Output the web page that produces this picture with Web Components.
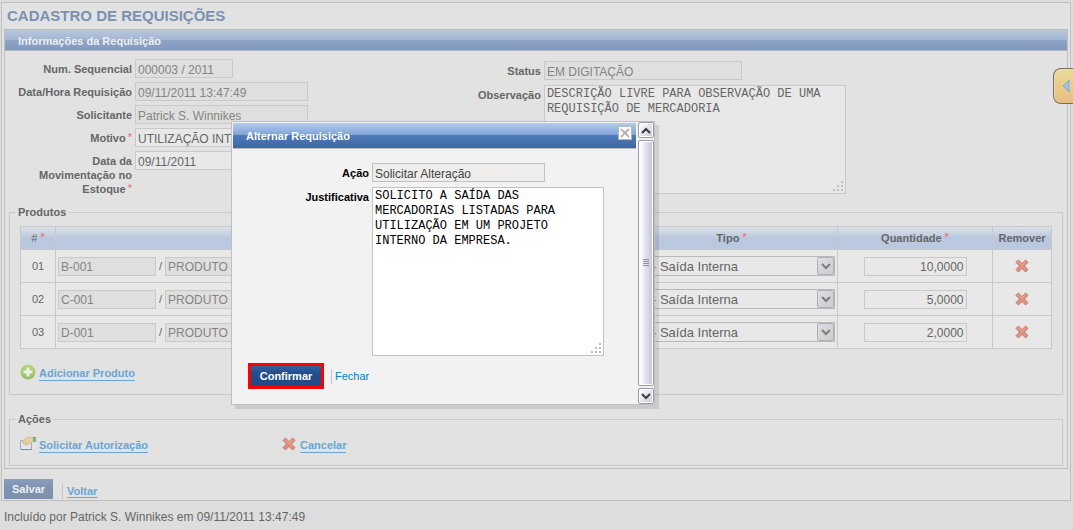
<!DOCTYPE html>
<html lang="pt-BR">
<head>
<meta charset="utf-8">
<title>Cadastro de Requisições</title>
<style>
  html { background: #dddddd; }
  body {
    margin: 0; padding-top: 2px;
    font: 11px/14px "Liberation Sans", Arial, sans-serif;
    color: #666666;
  }
  main { display: block; }
  .columns { display: grid; grid-template-columns: 5fr 8fr; padding-top: 8px; }
  .stack { display: flex; flex-direction: column; gap: 4px; }
  .second { --label-width: 129px; padding-top: 2px; gap: 5px; }
  .actions { display: grid; grid-template-columns: repeat(4, 1fr); gap: 8px; padding: 10px 0 13px 4px; }
  .add { display: flex; padding: 15px 0 14px 4px; }
  .note { margin: 0; padding: 7px 4px; font-size: 12px; line-height: 18px; }
  .dialog-form { padding-top: 14px; gap: 5px; }
</style>
</head>
<body>
<main>
  <app-panel>
    <span slot="title">CADASTRO DE REQUISIÇÕES</span>
    <section-box heading="Informações da Requisição">
      <div class="columns">
        <div class="stack">
          <form-field label="Num. Sequencial" value="000003 / 2011" size="98" locked></form-field>
          <form-field label="Data/Hora Requisição" value="09/11/2011 13:47:49" size="173" locked></form-field>
          <form-field label="Solicitante" value="Patrick S. Winnikes" size="173" locked></form-field>
          <form-field label="Motivo" value="UTILIZAÇÃO INTERNA" size="173" required></form-field>
          <form-field label="Data da|Movimentação no|Estoque" value="09/11/2011" size="98" required></form-field>
        </div>
        <div class="stack second">
          <form-field label="Status" value="EM DIGITAÇÃO" size="198" locked></form-field>
          <form-field label="Observação" value="DESCRIÇÃO LIVRE PARA OBSERVAÇÃO DE UMA REQUISIÇÃO DE MERCADORIA" size="302" rows="109"></form-field>
        </div>
      </div>
      <group-box legend="Produtos">
        <product-table></product-table>
        <div class="add"><icon-link icon="add">Adicionar Produto</icon-link></div>
      </group-box>
      <group-box legend="Ações" class="last">
        <div class="actions">
          <icon-link icon="hand">Solicitar Autorização</icon-link>
          <icon-link icon="cross">Cancelar</icon-link>
        </div>
      </group-box>
    </section-box>
    <button-bar slot="footer" action="Salvar" link="Voltar"></button-bar>
  </app-panel>
  <p class="note">Incluído por Patrick S. Winnikes em 09/11/2011 13:47:49</p>
</main>
<side-tab></side-tab>
<modal-dialog heading="Alternar Requisição">
  <div class="stack dialog-form">
    <form-field label="Ação" value="Solicitar Alteração" size="173" locked></form-field>
    <form-field label="Justificativa" value="SOLICITO A SAÍDA DAS MERCADORIAS LISTADAS PARA UTILIZAÇÃO EM UM PROJETO INTERNO DA EMPRESA." size="232" rows="169"></form-field>
  </div>
  <button-bar class="marked" action="Confirmar" link="Fechar"></button-bar>
</modal-dialog>

<script>
const define = (name, render) => customElements.define(name, class extends HTMLElement {
  connectedCallback() {
    if (this.shadowRoot) return;
    const template = document.createElement('template');
    template.innerHTML = render(this);
    this.attachShadow({ mode: 'open' }).append(template.content.cloneNode(true));
  }
});

const icons = {
  cross: `<svg width="16" height="16" viewBox="0 0 16 16" aria-hidden="true">
    <path d="M4.4 2 8 5.6 11.6 2 14 4.4 10.4 8 14 11.6 11.6 14 8 10.4 4.4 14 2 11.6 5.6 8 2 4.4Z" fill="#e2917f" stroke="#bd7b6c" stroke-linejoin="round"/>
    <path d="M4.3 3.3 8 7 11.7 3.3" fill="none" stroke="#eda795"/></svg>`,
  add: `<svg width="16" height="16" viewBox="0 0 16 16" aria-hidden="true">
    <defs><linearGradient id="g" x2="0" y2="1"><stop stop-color="#b9d681"/><stop offset="1" stop-color="#8fbd62"/></linearGradient></defs>
    <circle cx="8" cy="8" r="7.5" fill="url(#g)"/><path d="M6.5 3.5h3v3h3v3h-3v3h-3v-3h-3v-3h3Z" fill="#edf0e6"/></svg>`,
  hand: `<svg width="16" height="16" viewBox="0 0 16 16" aria-hidden="true">
    <path d="M.5 4.500h11v9H.5z" fill="#e3e6eb" stroke="#a1a9bd"/><path d="M1 13.500h11" stroke="#808ba5"/>
    <path d="M13 1h3v5h-3z" fill="#74b979"/><path d="M13 1h2v1h-2z" fill="#4ba858"/>
    <path d="M2 5.500C4 3.500 6 1.500 8 1.500h5v4l-3 2-2 1.500H5V7.500H3Z" fill="#e5d2a3" stroke="#cbb481" stroke-width=".7"/>
    <path d="m3 6.500 3-2M5 8l4-3" stroke="#cbb481" stroke-width=".7"/></svg>`
};

define('app-panel', () => `<style>
  :host { display: block; margin: 0 2px 0 1px; padding: 0 2px 1px; border: 1px solid #bfbfbf; background: #e2e2e2; }
  h1 { margin: 0; padding-left: 3px; font-size: 15px; line-height: 26px; font-weight: bold; color: #7a91b3; }
  ::slotted([slot=footer]) { margin-top: 10px; }
</style><h1><slot name="title"></slot></h1><slot></slot><slot name="footer"></slot>`);

define('section-box', el => `<style>
  :host { display: block; border: 1px solid #bfbfbf; }
  h2 { margin: 0; padding-left: 13px; height: 20px; border-bottom: 1px solid #b4b8bf; font-size: 11px; line-height: 22px; color: #eeeeee;
    background: linear-gradient(#b7c7dc, #a3b6d2 50%, #8ea3c7 50%, #8299be); }
  .body { padding: 0 4px 2px 0; }
</style><h2>${el.getAttribute('heading')}</h2><div class="body"><slot></slot></div>`);

define('form-field', el => {
  const at = name => el.getAttribute(name);
  const label = at('label').split('|').join('<br>') + (el.hasAttribute('required') ? '<sup>*</sup>' : '');
  const control = at('rows')
    ? `<span class="area"><textarea id="c" spellcheck="false" style="height:${at('rows')}px">${at('value')}</textarea>
       <svg width="10" height="10" aria-hidden="true"><path d="M8 0h2v2H8zM4 4h2v2H4zM8 4h2v2H8zM0 8h2v2H0zM4 8h2v2H4zM8 8h2v2H8z" fill="var(--grip, #c2c2c2)"/></svg></span>`
    : `<input id="c" value="${at('value')}" ${el.hasAttribute('locked') ? 'readonly' : ''}>`;
  return `<style>
  :host { display: flex; align-items: flex-start; gap: 3px; }
  label { flex: none; width: var(--label-width, 127px); padding-top: 3px; text-align: right; font-weight: bold; line-height: 14px; }
  sup { margin-left: 2px; font-weight: normal; font-size: 11px; line-height: 0; vertical-align: 1px; color: #ee6666; }
  input, textarea { display: block; box-sizing: border-box; width: ${at('size')}px; margin: 0; outline: 0; border: 1px solid var(--line, #c9c9c9); border-radius: 0; background: var(--field, #e8e8e8); color: inherit; }
  input { height: 19px; padding: 2px 2px 0; font: 12px/16px "Liberation Sans", Arial, sans-serif; }
  input[readonly] { background: var(--locked, #dfdfdd); color: var(--locked-ink, #848484); }
  textarea { padding: 1px 2px; resize: none; overflow: hidden; font: 12px/15px "Liberation Mono", "Courier New", monospace; }
  .area { position: relative; }
  svg { position: absolute; right: 3px; bottom: 3px; }
</style><label for="c">${label}</label>${control}`;
});

define('group-box', el => `<style>
  :host { display: block; margin: 9px 0 0 4px; }
  :host(.last) { margin-top: 17px; }
  fieldset { margin: 0; padding: 0 6px; border: 1px solid #c9c9c9; min-width: 0; }
  legend { padding: 0 2px; font-weight: bold; line-height: 14px; }
</style><fieldset><legend>${el.getAttribute('legend')}</legend><slot></slot></fieldset>`);

define('icon-link', el => `<style>
  :host { display: block; }
  a { display: flex; width: fit-content; height: 16px; align-items: center; gap: 3px; color: #6aa5d3; font-weight: bold; text-decoration: none; }
  svg { display: block; }
  span { line-height: 13px; border-bottom: 1px solid; margin-top: 3px; }
</style><a href="#">${icons[el.getAttribute('icon')]}<span><slot></slot></span></a>`);

define('product-table', () => {
  const row = ([number, code, quantity]) => `<tr>
    <td>${number}</td>
    <td><div class="product"><input class="code" readonly aria-label="Código" value="${code}"><span>/</span><input class="name" readonly aria-label="Produto" value="PRODUTO"></div></td>
    <td><div class="pick"><select aria-label="Tipo"><option>- Saída Interna</option></select><i><svg width="10" height="7" aria-hidden="true"><path d="m1 1 4 4 4-4" fill="none" stroke="#7c7c7c" stroke-width="2"/></svg></i></div></td>
    <td><input class="quantity" aria-label="Quantidade" value="${quantity}"></td>
    <td><button type="button" aria-label="Remover">${icons.cross}</button></td></tr>`;
  return `<style>
  :host { display: block; margin: 7px 4px 0; }
  table { width: 100%; table-layout: fixed; border-collapse: collapse; font-size: 11px; background: #e8e8e8; }
  th, td { padding: 0; border: 1px solid #c9c9c9; text-align: center; vertical-align: middle; }
  th { height: 22px; }
  td { height: 32px; }
  thead tr { background: linear-gradient(#dde1e8, #c4cfe0 35%, #b9c8df 45%, #bac9e0); }
  th:first-child { font-weight: normal; }
  sup { margin-left: 3px; font-weight: normal; font-size: 11px; line-height: 0; vertical-align: 1px; color: #ee6666; }
  input { box-sizing: border-box; height: 19px; margin: 0; padding: 2px 2px 0; border: 1px solid #c9c9c9; border-radius: 0; outline: 0; background: #e8e8e8; color: #666666; font: 12px/16px "Liberation Sans", Arial, sans-serif; }
  input[readonly] { background: #dfdfdd; color: #848484; }
  .product { display: flex; align-items: center; gap: 3px; padding: 0 2px; }
  .code { flex: none; width: 98px; }
  .name { flex: 1; min-width: 0; }
  .quantity { display: block; width: 103px; margin: 0 auto; text-align: right; }
  .pick { position: relative; margin: 0 2px; }
  select { display: block; width: 100%; height: 20px; appearance: none; box-sizing: border-box; margin: 0; padding: 1px 20px 0 23px; border: 1px solid #b9b9bc; border-radius: 0; background: #e8e8e8; color: #666666; font: 13px/17px "Liberation Sans", Arial, sans-serif; }
  i { position: absolute; top: 1px; right: 1px; width: 15px; height: 16px; display: grid; place-items: center; border: 1px solid #b0b0b6; border-radius: 2px; background: linear-gradient(135deg, #dedee0, #ccccd2); pointer-events: none; }
  button { display: block; margin: 0 auto; padding: 0; border: 0; background: none; }
  button svg { display: block; }
</style><table>
  <colgroup><col style="width:35px"><col><col style="width:212px"><col style="width:155px"><col style="width:59px"></colgroup>
  <thead><tr><th>#<sup>*</sup></th><th></th><th>Tipo<sup>*</sup></th><th>Quantidade<sup>*</sup></th><th>Remover</th></tr></thead>
  <tbody>${[['01', 'B-001', '10,0000'], ['02', 'C-001', '5,0000'], ['03', 'D-001', '2,0000']].map(row).join('')}</tbody></table>`;
});

define('button-bar', el => `<style>
  :host { display: flex; align-items: center; gap: 9px; }
  button { height: 20px; padding: 0 8px; border: 0; border-radius: 0; color: #eeeeee; font: bold 11px/20px "Liberation Sans", Arial, sans-serif; background: linear-gradient(#8a9dbd, #7f93b3 35%, #7c8fae); }
  a { margin-top: 4px; padding-left: 4px; border-left: 1px solid #c4c4c4; line-height: 15px; font-weight: bold; color: #6aa5d3; text-underline-offset: 2px; }
  :host(.marked) { gap: 7px; padding: 7px 15px; }
  :host(.marked) button { box-sizing: content-box; min-width: 54px; border: 3px solid #ff0000; color: #ffffff; background: linear-gradient(#3462a2, #234e8c 35%, #214b86) padding-box; }
  :host(.marked) a { margin-top: 0; padding-left: 3px; font-weight: normal; color: #0080d0; text-decoration: none; }
</style><button type="button">${el.getAttribute('action')}</button><a href="#">${el.getAttribute('link')}</a>`);

define('side-tab', () => `<style>
  :host { position: absolute; top: 68px; right: 0; }
  button { display: flex; align-items: center; box-sizing: border-box; width: 20px; height: 36px; padding: 0 0 0 8px; border: 1px solid #707070; border-right: 0; border-radius: 8px 0 0 8px; background: linear-gradient(#e7dc98, #e9bd80); box-shadow: inset 1px 1px #e9e0ad; }
  svg { display: block; flex: none; }
</style><button type="button" aria-label="Abrir painel"><svg width="8" height="14"><path d="M7 1v12L1 7Z" fill="#9fc0e4" stroke="#83a9d2"/></svg></button>`);

define('scroll-rail', () => `<style>
  :host { display: flex; flex-direction: column; gap: 2px; width: 16px; background: #f0f0f2; }
  span { display: grid; place-items: center; flex: none; height: 14px; border: 1px solid #9a9aae; border-radius: 2px; background: linear-gradient(135deg, #ffffff, #c9c9dd); box-shadow: inset 0 0 0 1px #ffffff; }
  .thumb { flex: 1; background: linear-gradient(90deg, #fdfdff 10%, #e0e0ec 50%, #c9c9dd 90%); }
</style>
<span><svg width="10" height="7"><path d="m1 6 4-4 4 4" fill="none" stroke="#3a3a42" stroke-width="2"/></svg></span>
<span class="thumb"><svg width="6" height="8"><path d="M0 .5h6M0 2.500h6M0 4.500h6M0 6.500h6" stroke="#8f8fa2"/></svg></span>
<span><svg width="10" height="7"><path d="m1 1 4 4 4-4" fill="none" stroke="#3a3a42" stroke-width="2"/></svg></span>`);

define('modal-dialog', el => `<style>
  :host { --label-width: 136px; --line: #c2c2c2; --grip: #bdbdbd; --field: #ffffff; --locked: #eeedeb; --locked-ink: #444444;
    position: absolute; top: 121px; left: 231px; box-sizing: border-box; width: 424px; display: flex; border: 1px solid #bfbfbf; background: #f2f2f2; color: #000000; box-shadow: 4px 4px rgba(0, 0, 0, .1); }
  .page { flex: 1; padding: 1px 2px 8px 1px; }
  header { display: flex; align-items: flex-start; height: 26px; box-sizing: border-box; padding: 3px 4px 0 13px; border-bottom: 1px solid #b8bfca;
    background: linear-gradient(#b4cbee, #83a5d8 46%, #4f7cbc 46%, #3f67a1); }
  h2 { flex: 1; margin: 0; font-size: 11px; line-height: 20px; color: #ffffff; }
  header button { display: grid; place-items: center; width: 14px; height: 14px; padding: 0; border: 1px solid #b5b5b5; border-radius: 0; background: #ffffff; }
</style><div class="page" role="dialog"><header><h2>${el.getAttribute('heading')}</h2>
  <button type="button" aria-label="Fechar janela"><svg width="10" height="10"><path d="m1 1 8 8M9 1 1 9" stroke="#b5b5b5" stroke-width="2"/></svg></button></header>
  <slot></slot></div><scroll-rail></scroll-rail>`);
</script>
</body>
</html>
